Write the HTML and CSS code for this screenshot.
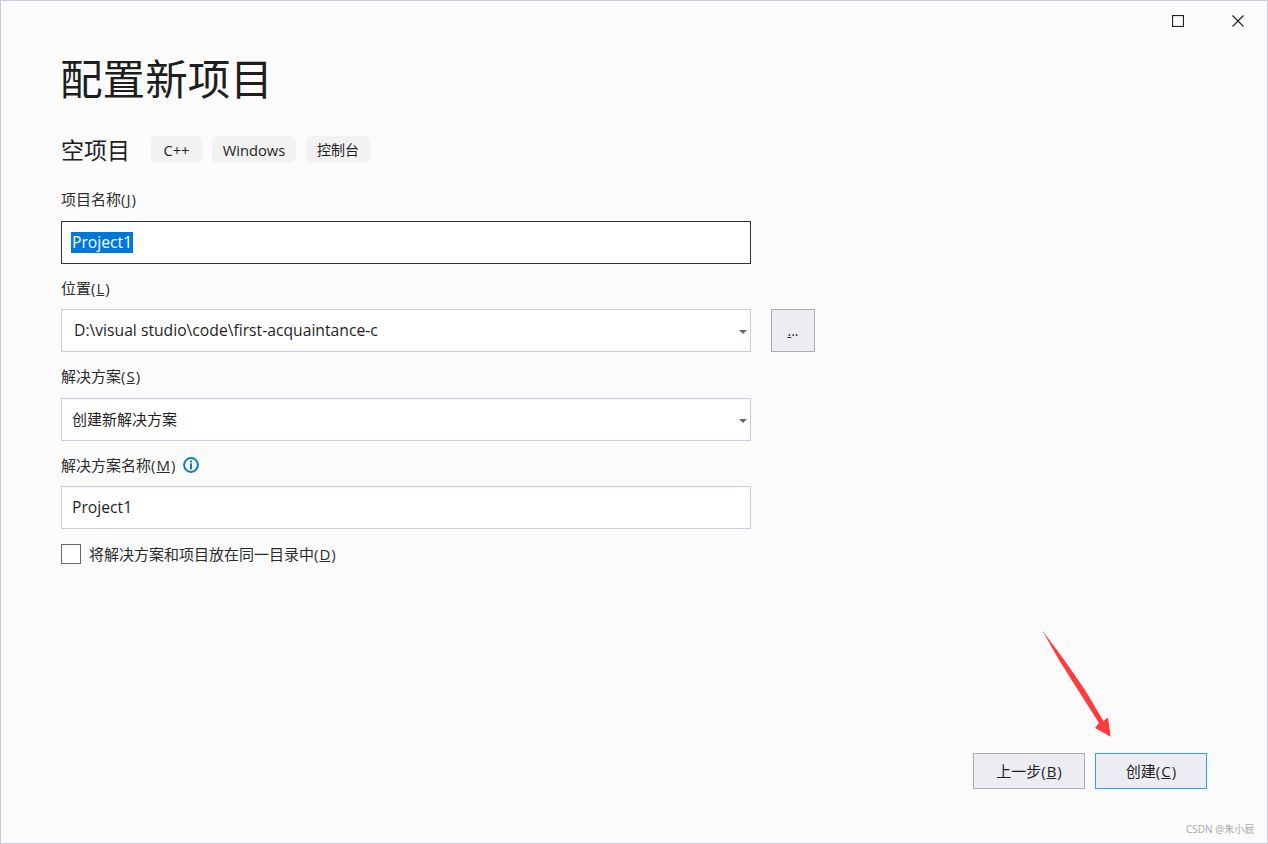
FILE: index.html
```html
<!DOCTYPE html>
<html lang="en">
<head>
  <meta charset="UTF-8">
  <title>配置新项目</title>
  <link rel="stylesheet" href="styles.css">
</head>
<body>

  <div class="window">
    <div class="window-controls">
      <svg class="win-icon" viewBox="0 0 12 12" width="12" height="12"><rect x="0.5" y="0.5" width="11" height="11" fill="none" stroke="#222" stroke-width="1.2"/></svg>
      <svg class="win-icon" viewBox="0 0 12 12" width="12" height="12"><path d="M0.5 0.5L11.5 11.5M11.5 0.5L0.5 11.5" fill="none" stroke="#222" stroke-width="1.1"/></svg>
    </div>

    <div class="content">
      <h1>配置新项目</h1>

      <div class="template-row">
        <h2>空项目</h2>
        <span class="tag tag-cpp">C++</span>
        <span class="tag tag-win">Windows</span>
        <span class="tag tag-cn">控制台</span>
      </div>

      <label class="field-label wide">项目名称(<u>J</u>)</label>
      <div class="text-box focused"><span class="selected">Project1</span></div>

      <div class="location-row">
        <div class="location-col">
          <label class="field-label">位置(<u>L</u>)</label>
          <div class="text-box combo path">D:\visual studio\code\first-acquaintance-c<span class="caret"></span></div>
        </div>
        <button class="browse"><u>.</u>..</button>
      </div>

      <label class="field-label wide">解决方案(<u>S</u>)</label>
      <div class="text-box combo cn-value">创建新解决方案<span class="caret"></span></div>

      <label class="field-label with-info">
        <span>解决方案名称(<u>M</u>)</span>
        <svg class="info" viewBox="0 0 16 16" width="16" height="16">
          <circle cx="8" cy="8" r="6.9" fill="none" stroke="#0e7fa8" stroke-width="2"/>
          <rect x="7" y="3.4" width="2" height="2" fill="#0e7fa8"/>
          <rect x="7" y="6.4" width="2" height="6" fill="#0e7fa8"/>
        </svg>
      </label>
      <div class="text-box">Project1</div>

      <div class="check-row">
        <span class="checkbox"></span>
        <span class="check-text">将解决方案和项目放在同一目录中(<u>D</u>)</span>
      </div>
    </div>

    <div class="actions">
      <button class="btn">上一步(<u>B</u>)</button>
      <button class="btn primary">创建(<u>C</u>)</button>
    </div>
  </div>

  <svg class="arrow" viewBox="0 0 80 115" width="80" height="115">
    <polygon points="2,0 25,31 45,60 63.5,91 68,87.5 70.7,106.7 55,98 59,93 38,60 19,30" fill="#ff3b3b"/>
  </svg>
  <div class="watermark">CSDN @朱小屁</div>

</body>
</html>
```

FILE: styles.css
```css
* {
  box-sizing: border-box;
}

body {
  margin: 0;
  font-family: "Open Sans", "Noto Sans CJK SC", sans-serif;
  color: #1e1e1e;
  background-color: #fbfbfb;
}

u {
  margin: 0 1px;
}

.window {
  width: 1268px;
  height: 844px;
  border: 1px solid #ccccdf;
  display: flex;
  flex-direction: column;
  background-color: #fbfbfb;
}

.window-controls {
  display: flex;
  justify-content: flex-end;
  gap: 48px;
  padding: 14px 23px 0 0;
  height: 26px;
}

.win-icon {
  display: block;
}

.content {
  padding-left: 60px;
  width: 815px;
}

h1 {
  margin: 18px 0 0 -1px;
  height: 64px;
  font-family: "Noto Sans CJK SC", sans-serif;
  font-size: 42.6px;
  font-weight: 400;
  line-height: 64px;
}

.template-row {
  display: flex;
  align-items: center;
  margin-top: 27px;
  height: 27px;
}

h2 {
  margin: 0 21px 0 0;
  font-family: "Noto Sans CJK SC", sans-serif;
  font-size: 23px;
  font-weight: 400;
  line-height: 27px;
}

.tag {
  height: 27px;
  padding-top: 1px;
  line-height: 26px;
  margin-right: 10px;
  text-align: center;
  background-color: #f2f2f2;
  border-radius: 6px;
  font-size: 14.7px;
}

.tag-cpp { width: 51px; }
.tag-win { width: 84px; }
.tag-cn { width: 64px; font-size: 14px; }

.field-label {
  display: block;
  height: 22px;
  margin-top: 13px;
  margin-bottom: 10px;
  font-size: 15px;
  line-height: 22px;
  color: #2b2b2b;
}

.field-label.wide {
  margin-bottom: 11px;
}

.template-row + .field-label {
  margin-top: 25px;
}

.with-info {
  display: flex;
  align-items: center;
  gap: 8px;
}

.info {
  display: block;
}

.text-box {
  position: relative;
  height: 43px;
  width: 690px;
  padding-left: 10px;
  font-size: 15.7px;
  line-height: 41px;
  background-color: #fff;
  border: 1px solid #ccccdf;
}

.text-box.focused {
  border-color: #333;
  padding-left: 9px;
}

.selected {
  display: inline-block;
  height: 21px;
  line-height: 20px;
  padding: 0 1px;
  color: #fff;
  background-color: #0078d7;
}

.path {
  padding-left: 12px;
}

.cn-value {
  font-size: 15px;
}

.caret {
  position: absolute;
  right: 3px;
  top: 20px;
  border-top: 4px solid #666;
  border-left: 4px solid transparent;
  border-right: 4px solid transparent;
}

.location-row {
  display: flex;
  align-items: flex-end;
  gap: 20px;
}

.browse {
  width: 44px;
  height: 43px;
  padding: 0;
  font-family: inherit;
  font-size: 14px;
  color: #1e1e1e;
  background-color: #ecedf2;
  border: 1px solid #adadad;
}

.browse u {
  margin: 0;
}

.check-row {
  display: flex;
  align-items: center;
  margin-top: 14px;
}

.checkbox {
  width: 20px;
  height: 20px;
  background-color: #fff;
  border: 1px solid #666;
}

.check-text {
  margin-left: 8px;
  font-size: 15px;
  color: #2b2b2b;
}

.actions {
  display: flex;
  justify-content: flex-end;
  gap: 10px;
  margin-top: auto;
  padding: 0 60px 54px 0;
}

.btn {
  width: 112px;
  height: 36px;
  padding: 0 0 2px;
  font-family: inherit;
  font-size: 15px;
  color: #1e1e1e;
  background-color: #ecedf2;
  border: 1px solid #adadad;
}

.btn.primary {
  border-color: #3399ff;
}

.arrow {
  position: absolute;
  left: 1040px;
  top: 630px;
}

.watermark {
  position: absolute;
  left: 1186px;
  top: 822px;
  font-size: 10px;
  line-height: 14px;
  color: #aaa;
}
```
